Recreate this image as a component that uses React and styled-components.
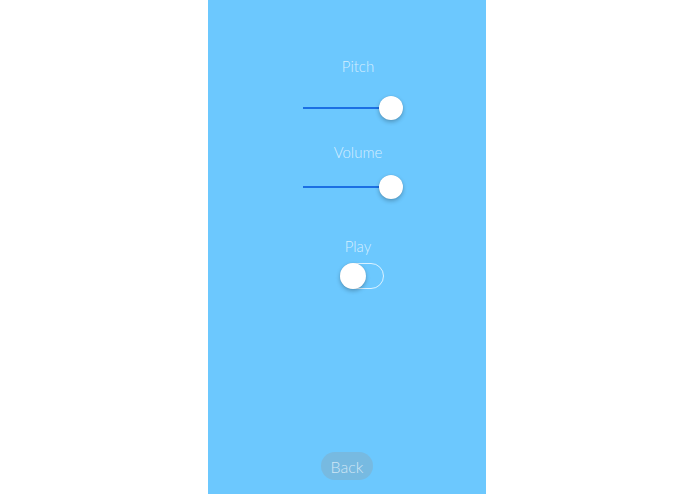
import React from 'react';
import styled, { createGlobalStyle } from 'styled-components';

const GlobalStyle = createGlobalStyle`
  html, body {
    margin: 0;
    padding: 0;
    background: #ffffff;
  }
`;

const App = () => (
  <Page>
    <GlobalStyle />
    <Screen>
      <Controls>
        <Label>Pitch</Label>
        <Slider value={1} />
        <Label gap={22}>Volume</Label>
        <Slider value={1} gap={13} />
        <Label gap={37}>Play</Label>
        <Toggle />
      </Controls>
      <BackButton>Back</BackButton>
    </Screen>
  </Page>
);

const Slider = ({ value, gap }) => (
  <Track gap={gap}>
    <Fill style={{ width: `${value * 76}px` }} />
    <Thumb />
  </Track>
);

export default App;

const Page = styled.div`
  display: flex;
  justify-content: flex-start;
  height: 494px;
  padding-left: 208px;
  font-family: 'Lato', 'Liberation Sans', sans-serif;
`;

const Screen = styled.div`
  width: 278px;
  height: 494px;
  background: #6cc8fe;
  display: flex;
  flex-direction: column;
  align-items: center;
  box-sizing: border-box;
  padding-bottom: 14px;
`;

const Controls = styled.div`
  display: flex;
  flex-direction: column;
  align-items: center;
  padding-top: 57px;
  padding-left: 22px;
`;

const Label = styled.div`
  font-size: 15px;
  line-height: 18px;
  font-weight: 300;
  color: rgba(255, 255, 255, 0.72);
  margin-top: ${p => p.gap || 0}px;
`;

const Track = styled.div`
  margin-top: ${p => p.gap || 20}px;
  margin-right: 10px;
  width: 100px;
  height: 26px;
  display: flex;
  align-items: center;
`;

const Fill = styled.div`
  height: 2px;
  background: #1c6fe3;
`;

const Thumb = styled.div`
  width: 24px;
  height: 24px;
  border-radius: 50%;
  background: #ffffff;
  box-shadow: 0 2px 4px rgba(0, 0, 0, 0.25), 0 0 1px rgba(0, 0, 0, 0.15);
`;

const Toggle = styled.div`
  margin-top: 8px;
  margin-left: 8px;
  width: 44px;
  height: 26px;
  box-sizing: border-box;
  border-radius: 13px;
  border: 1.5px solid rgba(255, 255, 255, 0.75);
  display: flex;
  align-items: center;

  &::before {
    content: '';
    width: 26px;
    height: 26px;
    margin-left: -1.5px;
    border-radius: 50%;
    background: #ffffff;
    box-shadow: 0 2px 4px rgba(0, 0, 0, 0.25), 0 0 1px rgba(0, 0, 0, 0.15);
  }
`;

const BackButton = styled.button`
  margin-top: auto;
  width: 52px;
  height: 28px;
  border: none;
  border-radius: 14px;
  background: rgba(140, 160, 172, 0.35);
  color: rgba(225, 240, 250, 0.85);
  font-family: 'Lato', 'Liberation Sans', sans-serif;
  font-weight: 300;
  font-size: 16px;
  padding: 0;
  cursor: pointer;
`;
